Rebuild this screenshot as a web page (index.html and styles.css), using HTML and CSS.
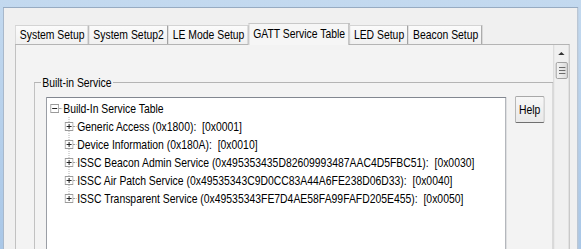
FILE: index.html
```html
<!DOCTYPE html>
<html lang="en">
<head>
    <meta charset="UTF-8">
    <title>GATT Service Table</title>
    <link rel="stylesheet" href="styles.css">
</head>
<body>
    <div class="dialog">
        <div class="tabs">
            <div class="tab">System Setup</div>
            <div class="tab">System Setup2</div>
            <div class="tab">LE Mode Setup</div>
            <div class="tab active">GATT Service Table</div>
            <div class="tab">LED Setup</div>
            <div class="tab">Beacon Setup</div>
        </div>
        <div class="page">
            <div class="page-body">
                <fieldset class="group">
                    <legend>Built-in Service</legend>
                    <div class="group-row">
                        <div class="tree">
                            <div class="row root">
                                <svg class="exp" viewBox="0 0 9 9" preserveAspectRatio="none"><rect x="0.5" y="0.5" width="8" height="8" fill="#fff" stroke="#9a9a9a"/><path d="M2 4.5h5" stroke="#222"/></svg>
                                <span class="stub"></span>
                                <span class="label">Build-In Service Table</span>
                            </div>
                            <div class="children">
                                <div class="row">
                                    <svg class="exp" viewBox="0 0 9 9" preserveAspectRatio="none"><rect x="0.5" y="0.5" width="8" height="8" fill="#fff" stroke="#9a9a9a"/><path d="M2 4.5h5M4.5 2v5" stroke="#222"/></svg>
                                    <span class="stub"></span>
                                    <span class="label">Generic Access (0x1800):  [0x0001]</span>
                                </div>
                                <div class="row">
                                    <svg class="exp" viewBox="0 0 9 9" preserveAspectRatio="none"><rect x="0.5" y="0.5" width="8" height="8" fill="#fff" stroke="#9a9a9a"/><path d="M2 4.5h5M4.5 2v5" stroke="#222"/></svg>
                                    <span class="stub"></span>
                                    <span class="label">Device Information (0x180A):  [0x0010]</span>
                                </div>
                                <div class="row">
                                    <svg class="exp" viewBox="0 0 9 9" preserveAspectRatio="none"><rect x="0.5" y="0.5" width="8" height="8" fill="#fff" stroke="#9a9a9a"/><path d="M2 4.5h5M4.5 2v5" stroke="#222"/></svg>
                                    <span class="stub"></span>
                                    <span class="label">ISSC Beacon Admin Service (0x495353435D82609993487AAC4D5FBC51):  [0x0030]</span>
                                </div>
                                <div class="row">
                                    <svg class="exp" viewBox="0 0 9 9" preserveAspectRatio="none"><rect x="0.5" y="0.5" width="8" height="8" fill="#fff" stroke="#9a9a9a"/><path d="M2 4.5h5M4.5 2v5" stroke="#222"/></svg>
                                    <span class="stub"></span>
                                    <span class="label">ISSC Air Patch Service (0x49535343C9D0CC83A44A6FE238D06D33):  [0x0040]</span>
                                </div>
                                <div class="row">
                                    <svg class="exp" viewBox="0 0 9 9" preserveAspectRatio="none"><rect x="0.5" y="0.5" width="8" height="8" fill="#fff" stroke="#9a9a9a"/><path d="M2 4.5h5M4.5 2v5" stroke="#222"/></svg>
                                    <span class="stub"></span>
                                    <span class="label">ISSC Transparent Service (0x49535343FE7D4AE58FA99FAFD205E455):  [0x0050]</span>
                                </div>
                            </div>
                        </div>
                        <button class="help">Help</button>
                    </div>
                </fieldset>
            </div>
            <div class="vscroll">
                <div class="arrow-up"></div>
                <div class="thumb"><span></span><span></span><span></span></div>
            </div>
        </div>
    </div>
</body>
</html>
```

FILE: styles.css
```css
body {
    margin: 0;
    height: 249px;
    overflow: hidden;
    background: linear-gradient(to bottom, #c3d9ef, #a9c7e7);
    font-family: "Liberation Sans", Arial, sans-serif;
    font-size: 13px;
    color: #000;
}
/* the dialog font is narrow, so the whole dialog is squeezed sideways;
   sizes below are in unsqueezed pixels (screen px / 0.8) */
.dialog {
    box-sizing: border-box;
    width: 719px;
    height: 260px;
    margin: 7px 0 0 3px;
    border: 1px solid #97abc2;
    background-color: #f0f0f0;
    transform: scaleX(0.8);
    transform-origin: 0 0;
}
.tabs {
    display: flex;
    align-items: flex-end;
    padding: 15px 0 0 14px;
    margin-bottom: -1px;
    position: relative;
    z-index: 1;
}
.tab {
    height: 18px;
    line-height: 18px;
    padding: 0 4px 0 5px;
    margin-bottom: 1px;
    border: 1px solid #d4d4d4;
    border-right-color: #7e7e7e;
    border-bottom: none;
    background: linear-gradient(to bottom, #fbfbfb, #f0f0f0);
    white-space: nowrap;
}
.tab.active {
    height: 20px;
    padding-top: 1px;
    margin-bottom: 0;
    border-color: #c8c8c8;
    border-right-color: #7e7e7e;
    background: #f6f6f6;
}
.page {
    display: flex;
    height: 220px;
    margin: 0 10px 0 14px;
    border: 1px solid #b4b4b4;
    border-right-color: #8e8e8e;
    border-bottom: none;
    background-color: #f3f3f3;
}
.page-body {
    flex: 1;
    min-width: 0;
}
.group {
    margin: 30px 0 0 23px;
    padding: 7px 10px 0 14px;
    border: 1px solid #b4b4b4;
    border-bottom: none;
    min-width: 0;
    height: 200px;
}
.group legend {
    margin-left: -7.5px;
    padding: 0 2.5px;
    line-height: 15px;
}
.group-row {
    display: flex;
    align-items: flex-start;
}
.tree {
    flex: 1;
    height: 200px;
    padding-top: 1px;
    overflow: hidden;
    border: 1px solid #828790;
    background-color: #fff;
}
.row {
    display: flex;
    align-items: center;
    height: 18px;
    padding-left: 21.5px;
    white-space: pre;
}
.row.root {
    padding-left: 4px;
}
.exp {
    flex: none;
    width: 11.25px;
    height: 9px;
}
.stub {
    width: 4px;
    margin-right: 1px;
    border-top: 1px dotted #a0a0a0;
}
.children {
    background-image: repeating-linear-gradient(to bottom, #a0a0a0 0 1px, transparent 1px 2px);
    background-size: 1px calc(100% - 9px);
    background-repeat: no-repeat;
    background-position: 27px 0;
}
.help {
    width: 37.5px;
    height: 27px;
    margin: -1px 0 0 11px;
    padding: 0;
    font: inherit;
    border: 1px solid #a8a8a8;
    border-right-color: #6f6f6f;
    border-bottom-color: #6f6f6f;
    border-radius: 2px;
    background: linear-gradient(to bottom, #f7f7f7, #e9e9e9);
}
.vscroll {
    width: 18px;
    border-left: 1px solid #d0d0d0;
    background-color: #f0f0f0;
}
.arrow-up {
    height: 17px;
    display: flex;
    justify-content: center;
    align-items: center;
}
.arrow-up::before {
    content: "";
    border-left: 4px solid transparent;
    border-right: 4px solid transparent;
    border-bottom: 3px solid #333;
}
.thumb {
    height: 15px;
    margin: 0 1px 0 2px;
    border: 1px solid #979797;
    border-radius: 2px;
    background: linear-gradient(to right, #f3f3f3, #dcdcdc);
    display: flex;
    flex-direction: column;
    justify-content: center;
    align-items: center;
    gap: 2px;
}
.thumb span {
    width: 8px;
    height: 1px;
    background-color: #6b6b6b;
}
```
